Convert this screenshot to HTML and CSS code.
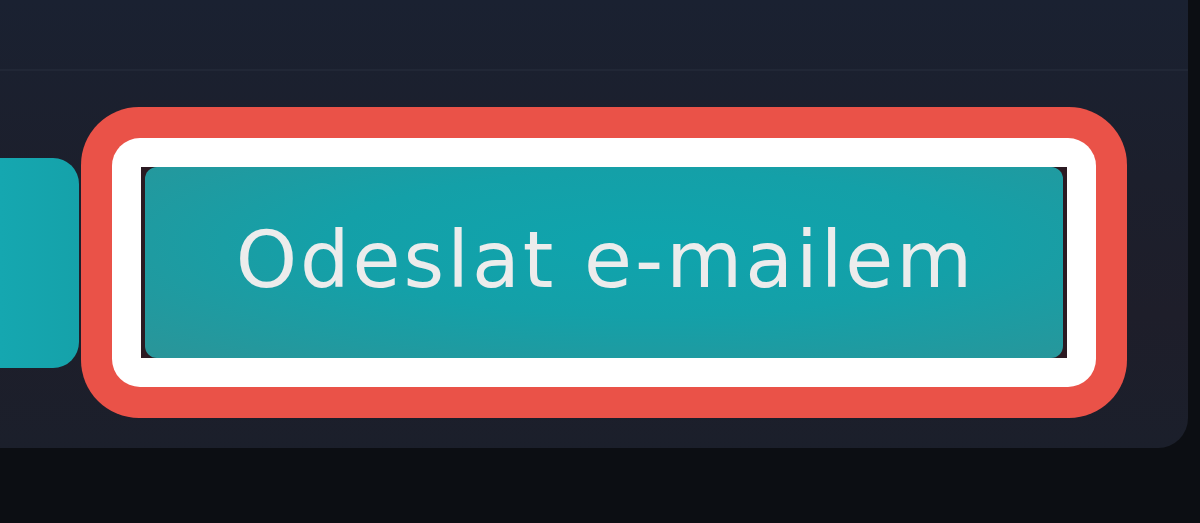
FILE: index.html
```html
<!DOCTYPE html>
<html lang="cs">
<head>
<meta charset="utf-8">
<title>Odeslat e-mailem</title>
<link rel="stylesheet" href="styles.css">
</head>
<body>
<div class="panel">
  <div class="panel-head"></div>
  <div class="actions">
    <div class="prev-btn"></div>
    <div class="focus-ring">
      <div class="focus-inner">
        <div class="btn-shell">
          <button class="btn" type="button">Odeslat e-mailem</button>
        </div>
      </div>
    </div>
  </div>
</div>
</body>
</html>
```
FILE: styles.css
```css
html, body {
  margin: 0;
  padding: 0;
}
body {
  width: 1200px;
  height: 523px;
  background: #0c0e13;
  overflow: hidden;
  font-family: "DejaVu Sans", "Noto Sans", sans-serif;
}
.panel {
  width: 1188px;
  height: 448px;
  border-bottom-right-radius: 30px;
  background: linear-gradient(180deg, #1a2131 0%, #1c1f2c 40%, #1e1e2a 70%, #1b1f2b 100%);
  display: flex;
  flex-direction: column;
}
.panel-head {
  height: 69px;
  border-bottom: 2px solid #212736;
  flex: none;
}
.actions {
  display: flex;
  align-items: center;
  padding-top: 36px;
  gap: 2px;
}
.prev-btn {
  width: 79px;
  height: 210px;
  background: linear-gradient(90deg, #15a7b0, #15a2aa);
  border-radius: 0 26px 26px 0;
  flex: none;
}
.focus-ring {
  background: #ea5248;
  padding: 31px;
  border-radius: 58px;
}
.focus-inner {
  background: #ffffff;
  padding: 29px;
  border-radius: 28px;
}
.btn-shell {
  background: #2b1a22;
  padding: 0 4px;
  width: 918px;
  height: 191px;
  display: flex;
}
.btn {
  flex: 1;
  border: 0;
  margin: 0;
  padding: 0 0 6px 3px;
  border-radius: 12px;
  background: radial-gradient(ellipse at 55% 40%, #0fa4ad 0%, #14a0a8 45%, #2a9599 100%);
  color: #ececec;
  font-family: "DejaVu Sans", "Noto Sans", sans-serif;
  font-size: 78px;
  font-weight: 400;
  letter-spacing: 3px;
  cursor: pointer;
}
```
